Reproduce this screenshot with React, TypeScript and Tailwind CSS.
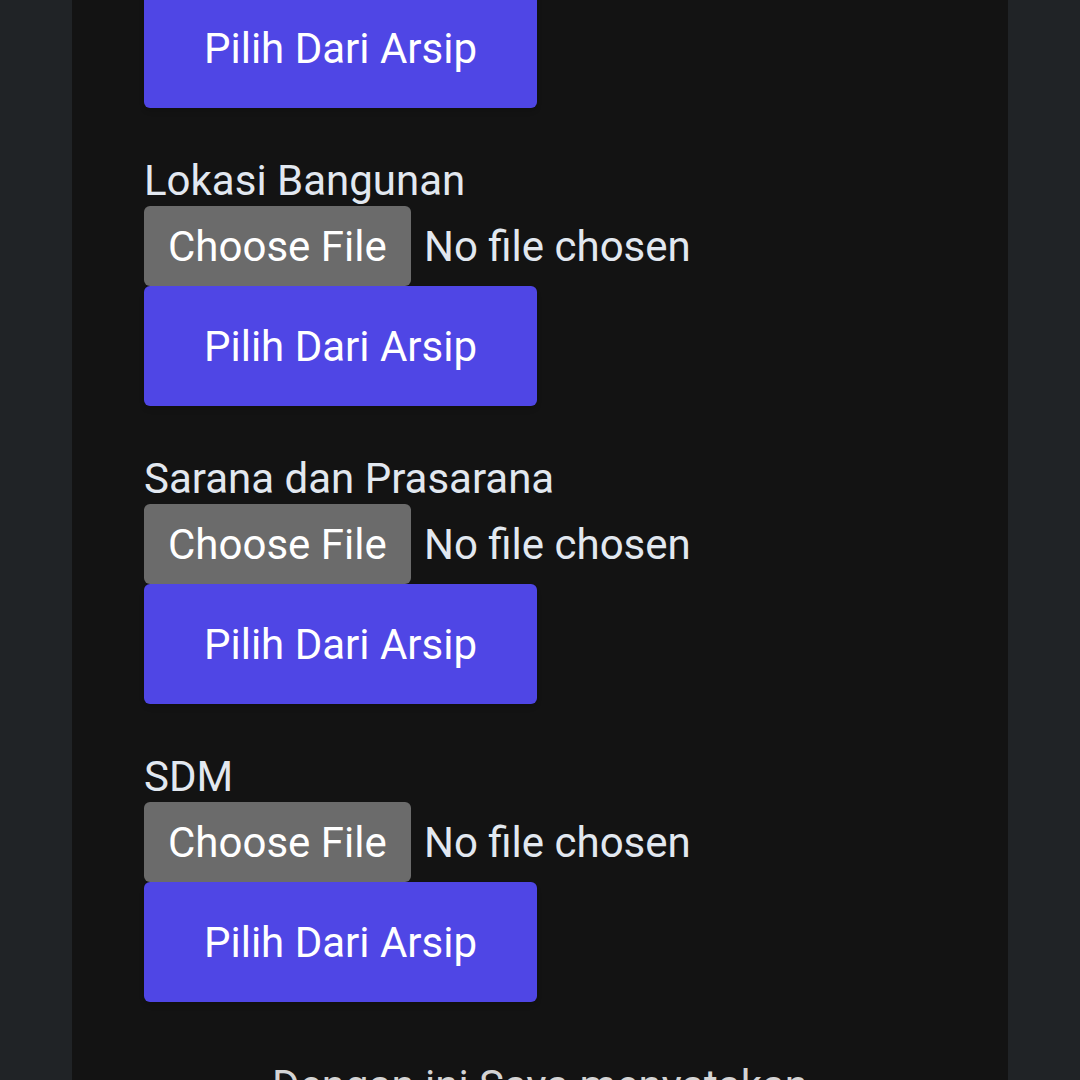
export default function App() {
  const sections = ["Lokasi Bangunan", "Sarana dan Prasarana", "SDM"];

  return (
    <div className="h-[1080px] overflow-hidden bg-[#202326] px-[72px] font-['Roboto','Liberation_Sans',sans-serif]">
      <div className="flex flex-col h-full bg-[#131313] px-[72px] text-[42px]">
        {/* previous section, scrolled off the top */}
        <div className="-mt-[12px]">
          <ArchiveButton />
        </div>

        {sections.map((label) => (
          <div key={label} className="mt-[47px]">
            <div className="leading-[51px] text-[#e2e8f0]">{label}</div>
            <FileInput />
            <ArchiveButton />
          </div>
        ))}

        <p className="mt-[52px] shrink-0 text-center leading-normal text-[#d4d4d4]">Dengan ini Saya menyatakan</p>
      </div>
    </div>
  );
}

function FileInput() {
  return (
    <label className="flex items-center h-[80px] cursor-pointer">
      <span className="flex items-center h-[80px] w-[267px] pl-[24px] rounded-[6px] bg-[#6b6b6b] text-white leading-normal">
        Choose File
      </span>
      <span className="ml-[13px] text-[#e2e8f0] leading-normal">No file chosen</span>
    </label>
  );
}

function ArchiveButton() {
  return (
    <button
      type="button"
      className="flex items-center justify-center w-[393px] h-[120px] rounded-[6px] bg-[#4f46e5] text-white leading-normal shadow-md"
    >
      Pilih Dari Arsip
    </button>
  );
}
